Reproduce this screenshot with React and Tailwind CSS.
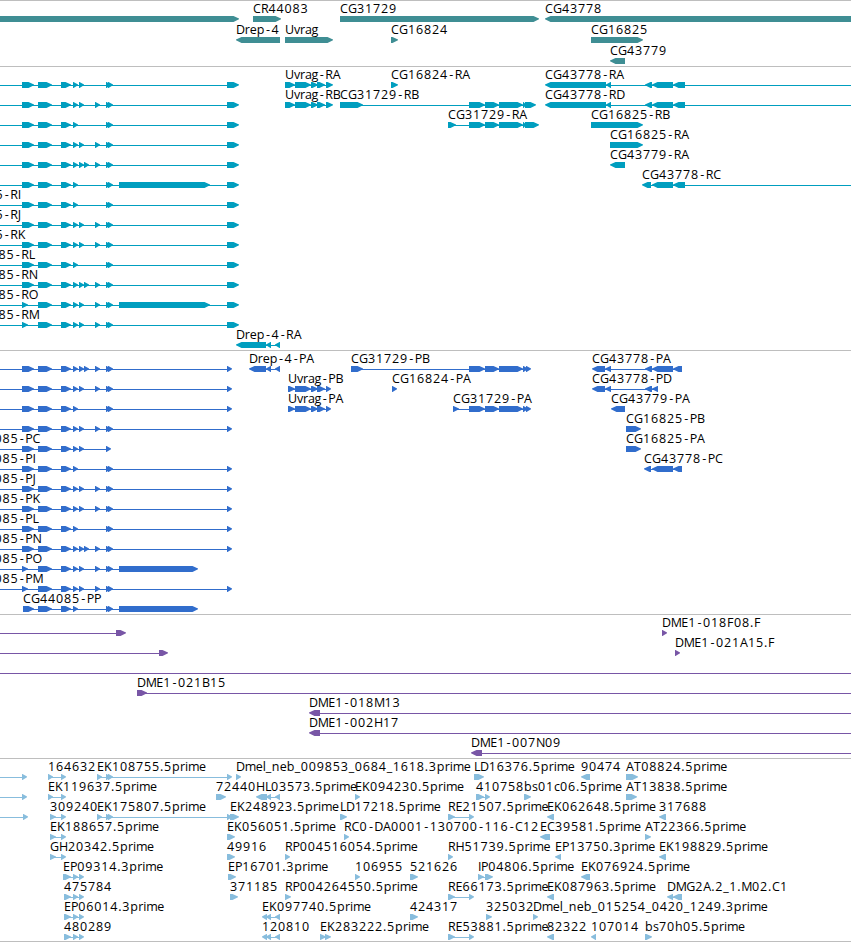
// Pixel advances for the label font, so labels keep even spacing.
const ADVANCE = {
  A: 8, B: 8, C: 8, D: 8.7, E: 7, F: 7, G: 9, H: 9, I: 3, J: 4, K: 8, L: 6, M: 10.6, N: 9, O: 9,
  P: 7.2, R: 7.6, T: 7.2, U: 9, a: 6.5, b: 8, c: 6, e: 7, g: 7, h: 8, i: 3, l: 3, m: 11, n: 8, p: 8,
  r: 5, s: 6, v: 6, "-": 6.7, ".": 4, _: 6,
};

// Edges that run past the visible window
const LEFT = -10;
const RIGHT = 870;

const fwd = (label, parts, extra = {}) => ({ label, parts, dir: 1, ...extra });
const rev = (label, parts, extra = {}) => ({ label, parts, dir: -1, ...extra });

// CG44085 exons
const A = [22, 34];
const A2 = [22, 28];
const B = [38, 52];
const C = [61, 71];
const D = [73, 78];
const E = [79, 84];
const F = [84, 89];
const G = [95, 100];
const H = [[106, 111], [108, 113]];
const UTR = [227, 239];
const STOP = [227, 232];

const cg44085 = (mid, tail, label, x, first = A) =>
  fwd(label, [first, B, C, D, ...mid, ...H, ...tail], { x, from: first[0] === 23 ? 23 : LEFT });

const uvrag = (start, end) => [[start, 295], [295, 311], [311, 318], [317, 325], [326, end]];
const cg31729 = [[469, 485], [485, 499], [499, 523]];
const cg43778 = [[606, 611], [645, 652], [652, 673], [673, 685]];
const ep = (start) => [[start, 71], [73, 78], [79, 84]];
const off = (a, b) => fwd("", [[a, b]], { from: LEFT });

const tracks = [
  {
    name: "genes",
    color: "text-[#3f8e94]",
    box: "h-[66px]",
    row: "h-[21px]",
    rows: [
      [
        fwd("", [[LEFT, 239]]),
        fwd("CR44083", [[253, 281]]),
        fwd("CG31729", [[340, 539]]),
        rev("CG43778", [[545, RIGHT]]),
      ],
      [
        rev("Drep-4", [[236, 280]]),
        fwd("Uvrag", [[285, 333]]),
        fwd("CG16824", [[391, 398]]),
        fwd("CG16825", [[591, 643]]),
      ],
      [rev("CG43779", [[610, 625]])],
    ],
  },
  {
    name: "transcripts",
    color: "text-[#009ebf]",
    box: "h-[284px]",
    row: "h-5",
    rows: [
      [
        cg44085([E], [UTR]),
        fwd("Uvrag-RA", uvrag(285, 333)),
        fwd("CG16824-RA", [[391, 398]]),
        rev("CG43778-RA", [[545, 606], ...cg43778], { to: RIGHT }),
      ],
      [
        cg44085([E, G], [UTR]),
        fwd("Uvrag-RB", uvrag(285, 333)),
        fwd("CG31729-RB", [[340, 363], ...cg31729, [523, 526], [525, 536]]),
        rev("CG43778-RD", [[545, 606], ...cg43778], { to: RIGHT }),
      ],
      [
        cg44085([], [UTR]),
        fwd("CG31729-RA", [[448, 456], ...cg31729, [523, 526], [525, 539]]),
        fwd("CG16825-RB", [[591, 643]]),
      ],
      [cg44085([E, G], [UTR]), fwd("CG16825-RA", [[610, 643]])],
      [cg44085([E, F, G], [UTR]), rev("CG43779-RA", [[610, 625]])],
      [
        cg44085([], [[119, 210], UTR]),
        rev("CG43778-RC", [[642, 651], [652, 673], [673, 685]], { to: RIGHT }),
      ],
      [cg44085([], [UTR], "CG44085-RI", -53.5)],
      [cg44085([E, G], [UTR], "CG44085-RJ", -53.5)],
      [cg44085([E, G], [UTR], "CG44085-RK", -53.5)],
      [cg44085([], [UTR], "CG44085-RL", -42.5)],
      [cg44085([E, F, G], [UTR], "CG44085-RN", -42.5)],
      [cg44085([E, G], [[119, 210], UTR], "CG44085-RO", -42.5, A2)],
      [cg44085([E, G], [UTR], "CG44085-RM", -42.5, A2)],
      [rev("Drep-4-RA", [[236, 266], [266, 271], [275, 280]])],
    ],
  },
  {
    name: "proteins",
    color: "text-[#316dcc]",
    box: "h-[264px]",
    row: "h-5",
    rows: [
      [
        cg44085([E, F, G], [STOP]),
        rev("Drep-4-PA", [[249, 266], [266, 271], [275, 280]]),
        fwd("CG31729-PB", [[351, 363], ...cg31729, [523, 528], [526, 531]]),
        rev("CG43778-PA", [[592, 605], [605, 611], [645, 652], [652, 673], [673, 682]]),
      ],
      [
        cg44085([E, G], [STOP]),
        fwd("Uvrag-PB", uvrag(288, 331)),
        fwd("CG16824-PA", [[392, 397]]),
        rev("CG43778-PD", [[592, 605], [605, 611], [645, 652], [652, 658]]),
      ],
      [
        cg44085([], [STOP]),
        fwd("Uvrag-PA", uvrag(288, 331)),
        fwd("CG31729-PA", [[453, 459], ...cg31729, [523, 528], [526, 531]]),
        rev("CG43779-PA", [[611, 625]]),
      ],
      [cg44085([E, G], [STOP]), fwd("CG16825-PB", [[626, 641]])],
      [
        fwd("CG44085-PC", [A, B, C, D, E, [106, 111]], { x: -38.5, from: LEFT }),
        fwd("CG16825-PA", [[626, 641]]),
      ],
      [
        cg44085([], [STOP], "CG44085-PI", -38.5),
        rev("CG43778-PC", [[644, 651], [652, 673], [673, 682]]),
      ],
      [cg44085([E, G], [STOP], "CG44085-PJ", -38.5)],
      [cg44085([E, G], [STOP], "CG44085-PK", -38.5)],
      [cg44085([], [STOP], "CG44085-PL", -38.5)],
      [cg44085([E, F, G], [STOP], "CG44085-PN", -38.5)],
      [cg44085([E, G], [[119, 198]], "CG44085-PO", -38.5, A2)],
      [cg44085([E, G], [STOP], "CG44085-PM", -38.5, A2)],
      [cg44085([], [[119, 198]], "CG44085-PP", 23, [23, 34])],
    ],
  },
  {
    name: "clones",
    color: "text-[#7856a6]",
    box: "h-[144px]",
    row: "h-5",
    rows: [
      [off(116, 126), fwd("DME1-018F08.F", [[662, 667]])],
      [off(159, 168), fwd("DME1-021A15.F", [[675, 680]])],
      [fwd("", [], { from: LEFT, to: RIGHT })],
      [fwd("DME1-021B15", [[137, 147]], { to: RIGHT })],
      [rev("DME1-018M13", [[309, 320]], { to: RIGHT })],
      [rev("DME1-002H17", [[309, 320]], { to: RIGHT })],
      [rev("DME1-007N09", [[471, 482]], { to: RIGHT })],
    ],
  },
  {
    name: "ests",
    color: "text-[#88bddd]",
    box: "h-[183px]",
    row: "h-5",
    rows: [
      [
        off(22, 27),
        fwd("164632", [[48, 53], [61, 66]]),
        fwd("EK108755.5prime", [[97, 102], ...H, [227, 232]]),
        fwd("Dmel_neb_009853_0684_1618.3prime", [[236, 241]]),
        fwd("LD16376.5prime", [[474, 484]]),
        rev("90474", [[581, 590]]),
        fwd("AT08824.5prime", [[626, 638]]),
      ],
      [
        off(22, 27),
        fwd("EK119637.5prime", [[48, 53], [61, 66]]),
        fwd("72440", [[216, 226]]),
        rev("HL03573.5prime", [[256, 267], [266, 271], [275, 280]]),
        fwd("EK094230.5prime", [[355, 360]]),
        fwd("410758", [[476, 484], [485, 490]]),
        fwd("bs01c06.5prime", [[524, 531]]),
        fwd("AT13838.5prime", [[626, 637]]),
      ],
      [
        off(23, 28),
        fwd("309240", [[50, 56], [61, 66]]),
        fwd("EK175807.5prime", [[97, 102], ...H, [227, 232]]),
        fwd("EK248923.5prime", [[230, 239]]),
        fwd("LD17218.5prime", [[340, 347]]),
        fwd("RE21507.5prime", [[448, 455], [469, 474]]),
        rev("EK062648.5prime", [[547, 554]]),
        rev("317688", [[659, 666]]),
      ],
      [
        fwd("EK188657.5prime", [[50, 56], [61, 66]]),
        fwd("EK056051.5prime", [[227, 235]]),
        fwd("RC0-DA0001-130700-116-C12", [[344, 349]]),
        rev("EC39581.5prime", [[540, 550]]),
        fwd("AT22366.5prime", [[645, 651]]),
      ],
      [
        fwd("GH20342.5prime", [[50, 56], [61, 66]]),
        fwd("49916", [[227, 235]]),
        fwd("RP004516054.5prime", [[285, 290]]),
        fwd("RH51739.5prime", [[448, 453]]),
        rev("EP13750.3prime", [[555, 561]]),
        rev("EK198829.5prime", [[659, 666]]),
      ],
      [
        fwd("EP09314.3prime", ep(63)),
        fwd("EP16701.3prime", [[228, 236]]),
        fwd("106955", [[355, 360]]),
        fwd("521626", [[410, 418]]),
        fwd("IP04806.5prime", [[478, 484], [485, 493]]),
        rev("EK076924.5prime", [[581, 590]]),
      ],
      [
        fwd("475784", ep(64)),
        fwd("371185", [[230, 238]]),
        fwd("RP004264550.5prime", [[285, 291]]),
        fwd("RE66173.5prime", [[448, 455], [469, 474]]),
        rev("EK087963.5prime", [[547, 554]]),
        rev("DMG2A.2_1.M02.C1", [[667, 673], [673, 682]]),
      ],
      [
        fwd("EP06014.3prime", ep(64)),
        rev("EK097740.5prime", [[262, 267], [266, 271], [275, 280]]),
        fwd("424317", [[410, 418]]),
        fwd("325032", [[486, 492]]),
        fwd("Dmel_neb_015254_0420_1249.3prime", [[533, 538]]),
      ],
      [
        fwd("480289", ep(64)),
        rev("120810", [[262, 267], [266, 271], [275, 280]]),
        fwd("EK283222.5prime", [[320, 326], [325, 331]]),
        fwd("RE53881.5prime", [[448, 455], [469, 474]]),
        rev("82322", [[547, 554]]),
        rev("107014", [[591, 596]]),
        fwd("bs70h05.5prime", [[645, 652]]),
      ],
    ],
  },
];

function glyphPositions(label, start) {
  let x = start;
  return [...label]
    .map((ch) => {
      // the hyphen is narrow, centre it in its cell
      const at = ch === "-" ? x + 1.3 : x;
      x += ADVANCE[ch] ?? 8;
      return at.toFixed(1);
    })
    .join(" ");
}

function arrow([a, b], dir) {
  const head = Math.min(6, b - a);
  if (dir > 0) {
    return `M${a} 16H${b - head + 0.5}L${b} 18.6V19.2L${b - head + 0.5} 22H${a}Z`;
  }
  return `M${b} 16H${a + head - 0.5}L${a} 18.6V19.2L${a + head - 0.5} 22H${b}Z`;
}

function Feature({ label, parts, dir, x, from, to }) {
  const start = from ?? parts[0][0];
  const end = to ?? parts[parts.length - 1][1] - 2;
  const spliced = parts.length !== 1 || from !== undefined || to !== undefined;
  return (
    <g>
      {spliced && (
        <rect x={start + (dir < 0 ? 2 : 0)} y="19" width={end - start} height="1" fill="currentColor" />
      )}
      {parts.map((part) => (
        <path key={part[0]} d={arrow(part, dir)} fill="currentColor" />
      ))}
      {label && (
        <text x={glyphPositions(label, x ?? start)} y="13" className="fill-black">
          {label}
        </text>
      )}
    </g>
  );
}

function Track({ track }) {
  return (
    <section className={`shrink-0 border-t border-[#bebebe] ${track.box} ${track.color}`}>
      {track.rows.map((features, i) => (
        <div key={i} className={track.row}>
          <svg width="851" height="24" viewBox="0 1 851 24" className="block overflow-visible">
            {features.map((feature, j) => (
              <Feature key={j} {...feature} />
            ))}
          </svg>
        </div>
      ))}
    </section>
  );
}

export default function App() {
  return (
    <main className="h-[942px] w-[851px] overflow-hidden bg-white">
      <div className="flex h-[942px] flex-col border-b border-[#bebebe] font-['Open_Sans','Noto_Sans',sans-serif] text-[12.5px]">
        {tracks.map((track) => (
          <Track key={track.name} track={track} />
        ))}
      </div>
    </main>
  );
}
